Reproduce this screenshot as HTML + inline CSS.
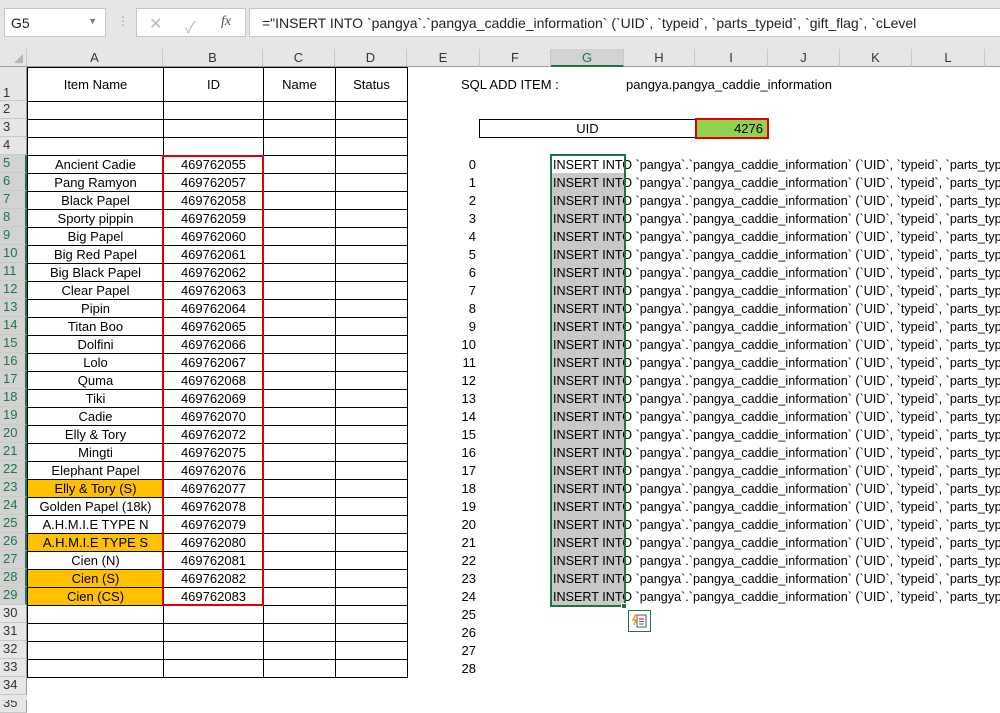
<!DOCTYPE html>
<html><head><meta charset="utf-8"><style>
*{margin:0;padding:0;box-sizing:border-box}
body{width:1000px;height:700px;overflow:hidden;background:#fff;font-family:"Liberation Sans","Noto Sans CJK JP",sans-serif;font-size:13px;color:#000;position:relative}
.a{position:absolute}
.top{left:0;top:0;width:1000px;height:49px;background:#e6e6e6}
.nb{left:4px;top:8px;width:102px;height:29px;background:#fff;border:1px solid #c6c6c6;font-size:14px;padding:6px 0 0 6px;color:#222}
.fx{left:136px;top:8px;width:110px;height:29px;background:#fff;border:1px solid #c6c6c6;color:#bbb}
.fb{left:249px;top:8px;width:760px;height:29px;background:#fff;border:1px solid #c6c6c6;font-size:14px;padding:6px 0 0 12px;white-space:nowrap;color:#222}
.ch{top:49px;height:18px;background:#e6e6e6;border-right:1px solid #c8c8c8;border-bottom:1px solid #9b9b9b;text-align:center;font-size:13px;line-height:17px;color:#333}
.rh{left:0;width:27px;background:#e6e6e6;border-bottom:1px solid #c8c8c8;border-right:1px solid #9b9b9b;font-size:13px;color:#333;padding-left:3px}
.rh.s{color:#217346;border-right:2px solid #217346;background:#d2d2d2}
table{position:absolute;left:27px;top:67px;border-collapse:collapse}
td{border:1px solid #000;height:18px;text-align:center;font-size:13px;padding:0;line-height:16px;white-space:nowrap}
tr.r1 td{height:34px;vertical-align:middle}
td.y{background:#ffc000}
.n{width:40px;text-align:right;left:436px;height:18px;line-height:18px}
.g{left:553px;height:18px;line-height:18px;white-space:nowrap;font-size:12.6px}
</style></head><body>
<div class="a top"></div>
<div class="a nb">G5<span style="position:absolute;right:8px;top:7px;font-size:9px;color:#777">▼</span></div>
<div class="a" style="left:117px;top:14px;color:#999;font-size:12px">⋮</div>
<div class="a fx"><span class="a" style="left:12px;top:5px;font-size:16px">✕</span><span class="a" style="left:48px;top:5px;font-size:16px">✓</span><span class="a" style="left:84px;top:5px;font-style:italic;font-family:'Liberation Serif',serif;color:#555;font-size:14px">fx</span></div>
<div class="a fb">="INSERT INTO `pangya`.`pangya_caddie_information` (`UID`, `typeid`, `parts_typeid`, `gift_flag`, `cLevel</div>
<div class="a ch" style="left:0;width:27px"><span class="a" style="left:14px;top:5px;width:0;height:0;border-left:9px solid transparent;border-bottom:9px solid #b4b4b4"></span></div>
<div class="a ch" style="left:27px;width:136px">A</div>
<div class="a ch" style="left:163px;width:100px">B</div>
<div class="a ch" style="left:263px;width:72px">C</div>
<div class="a ch" style="left:335px;width:72px">D</div>
<div class="a ch" style="left:407px;width:73px">E</div>
<div class="a ch" style="left:480px;width:71px">F</div>
<div class="a ch" style="left:551px;width:73px;background:#d2d2d2;color:#217346;border-bottom:2px solid #217346">G</div>
<div class="a ch" style="left:624px;width:71px">H</div>
<div class="a ch" style="left:695px;width:73px">I</div>
<div class="a ch" style="left:768px;width:72px">J</div>
<div class="a ch" style="left:840px;width:72px">K</div>
<div class="a ch" style="left:912px;width:73px">L</div>
<div class="a ch" style="left:985px;width:20px"></div>

<div class="a rh" style="top:67px;height:34px;padding-top:18px">1</div>
<div class="a rh" style="top:101px;height:18px">2</div>
<div class="a rh" style="top:119px;height:18px">3</div>
<div class="a rh" style="top:137px;height:18px">4</div>
<div class="a rh s" style="top:155px;height:18px">5</div>
<div class="a rh s" style="top:173px;height:18px">6</div>
<div class="a rh s" style="top:191px;height:18px">7</div>
<div class="a rh s" style="top:209px;height:18px">8</div>
<div class="a rh s" style="top:227px;height:18px">9</div>
<div class="a rh s" style="top:245px;height:18px">10</div>
<div class="a rh s" style="top:263px;height:18px">11</div>
<div class="a rh s" style="top:281px;height:18px">12</div>
<div class="a rh s" style="top:299px;height:18px">13</div>
<div class="a rh s" style="top:317px;height:18px">14</div>
<div class="a rh s" style="top:335px;height:18px">15</div>
<div class="a rh s" style="top:353px;height:18px">16</div>
<div class="a rh s" style="top:371px;height:18px">17</div>
<div class="a rh s" style="top:389px;height:18px">18</div>
<div class="a rh s" style="top:407px;height:18px">19</div>
<div class="a rh s" style="top:425px;height:18px">20</div>
<div class="a rh s" style="top:443px;height:18px">21</div>
<div class="a rh s" style="top:461px;height:18px">22</div>
<div class="a rh s" style="top:479px;height:18px">23</div>
<div class="a rh s" style="top:497px;height:18px">24</div>
<div class="a rh s" style="top:515px;height:18px">25</div>
<div class="a rh s" style="top:533px;height:18px">26</div>
<div class="a rh s" style="top:551px;height:18px">27</div>
<div class="a rh s" style="top:569px;height:18px">28</div>
<div class="a rh s" style="top:587px;height:18px">29</div>
<div class="a rh" style="top:605px;height:18px">30</div>
<div class="a rh" style="top:623px;height:18px">31</div>
<div class="a rh" style="top:641px;height:18px">32</div>
<div class="a rh" style="top:659px;height:18px">33</div>
<div class="a rh" style="top:677px;height:18px">34</div>
<div class="a rh" style="top:695px;height:18px">35</div>

<table>
<colgroup><col style="width:136px"><col style="width:100px"><col style="width:72px"><col style="width:72px"></colgroup>
<tr class="r1"><td>Item Name</td><td>ID</td><td>Name</td><td>Status</td></tr>
<tr><td></td><td></td><td></td><td></td></tr>
<tr><td></td><td></td><td></td><td></td></tr>
<tr><td></td><td></td><td></td><td></td></tr>
<tr><td>Ancient Cadie</td><td>469762055</td><td></td><td></td></tr>
<tr><td>Pang Ramyon</td><td>469762057</td><td></td><td></td></tr>
<tr><td>Black Papel</td><td>469762058</td><td></td><td></td></tr>
<tr><td>Sporty pippin</td><td>469762059</td><td></td><td></td></tr>
<tr><td>Big Papel</td><td>469762060</td><td></td><td></td></tr>
<tr><td>Big Red Papel</td><td>469762061</td><td></td><td></td></tr>
<tr><td>Big Black Papel</td><td>469762062</td><td></td><td></td></tr>
<tr><td>Clear Papel</td><td>469762063</td><td></td><td></td></tr>
<tr><td>Pipin</td><td>469762064</td><td></td><td></td></tr>
<tr><td>Titan Boo</td><td>469762065</td><td></td><td></td></tr>
<tr><td>Dolfini</td><td>469762066</td><td></td><td></td></tr>
<tr><td>Lolo</td><td>469762067</td><td></td><td></td></tr>
<tr><td>Quma</td><td>469762068</td><td></td><td></td></tr>
<tr><td>Tiki</td><td>469762069</td><td></td><td></td></tr>
<tr><td>Cadie</td><td>469762070</td><td></td><td></td></tr>
<tr><td>Elly &amp; Tory</td><td>469762072</td><td></td><td></td></tr>
<tr><td>Mingti</td><td>469762075</td><td></td><td></td></tr>
<tr><td>Elephant Papel</td><td>469762076</td><td></td><td></td></tr>
<tr><td class="y">Elly &amp; Tory (S)</td><td>469762077</td><td></td><td></td></tr>
<tr><td>Golden Papel (18k)</td><td>469762078</td><td></td><td></td></tr>
<tr><td>A.H.M.I.E TYPE N</td><td>469762079</td><td></td><td></td></tr>
<tr><td class="y">A.H.M.I.E TYPE S</td><td>469762080</td><td></td><td></td></tr>
<tr><td>Cien (N)</td><td>469762081</td><td></td><td></td></tr>
<tr><td class="y">Cien (S)</td><td>469762082</td><td></td><td></td></tr>
<tr><td class="y">Cien (CS)</td><td>469762083</td><td></td><td></td></tr>
<tr><td></td><td></td><td></td><td></td></tr>
<tr><td></td><td></td><td></td><td></td></tr>
<tr><td></td><td></td><td></td><td></td></tr>
<tr><td></td><td></td><td></td><td></td></tr>
</table>
<div class="a" style="left:162px;top:155px;width:102px;height:451px;border:2px solid #e00000"></div>
<div class="a" style="left:0;top:695px;width:27px;height:5px;background:#e6e6e6"></div>

<div class="a" style="left:461px;top:77px">SQL ADD ITEM :</div>
<div class="a" style="left:626px;top:77px">pangya.pangya_caddie_information</div>
<div class="a" style="left:479px;top:119px;width:217px;height:19px;border:1px solid #000;text-align:center;line-height:17px">UID</div>
<div class="a" style="left:695px;top:118px;width:74px;height:21px;border:2px solid #e00000;background:#92d050;text-align:right;padding-right:4px;line-height:17px">4276</div>

<div class="a" style="left:552px;top:173px;width:72px;height:432px;background:#c8c8c8"></div>
<div class="a n" style="top:156px">0</div><div class="a n" style="top:174px">1</div><div class="a n" style="top:192px">2</div><div class="a n" style="top:210px">3</div><div class="a n" style="top:228px">4</div><div class="a n" style="top:246px">5</div><div class="a n" style="top:264px">6</div><div class="a n" style="top:282px">7</div><div class="a n" style="top:300px">8</div><div class="a n" style="top:318px">9</div><div class="a n" style="top:336px">10</div><div class="a n" style="top:354px">11</div><div class="a n" style="top:372px">12</div><div class="a n" style="top:390px">13</div><div class="a n" style="top:408px">14</div><div class="a n" style="top:426px">15</div><div class="a n" style="top:444px">16</div><div class="a n" style="top:462px">17</div><div class="a n" style="top:480px">18</div><div class="a n" style="top:498px">19</div><div class="a n" style="top:516px">20</div><div class="a n" style="top:534px">21</div><div class="a n" style="top:552px">22</div><div class="a n" style="top:570px">23</div><div class="a n" style="top:588px">24</div><div class="a n" style="top:606px">25</div><div class="a n" style="top:624px">26</div><div class="a n" style="top:642px">27</div><div class="a n" style="top:660px">28</div>

<div class="a g" style="top:156px">INSERT INTO `pangya`.`pangya_caddie_information` (`UID`, `typeid`, `parts_typeid`</div>
<div class="a g" style="top:174px">INSERT INTO `pangya`.`pangya_caddie_information` (`UID`, `typeid`, `parts_typeid`</div>
<div class="a g" style="top:192px">INSERT INTO `pangya`.`pangya_caddie_information` (`UID`, `typeid`, `parts_typeid`</div>
<div class="a g" style="top:210px">INSERT INTO `pangya`.`pangya_caddie_information` (`UID`, `typeid`, `parts_typeid`</div>
<div class="a g" style="top:228px">INSERT INTO `pangya`.`pangya_caddie_information` (`UID`, `typeid`, `parts_typeid`</div>
<div class="a g" style="top:246px">INSERT INTO `pangya`.`pangya_caddie_information` (`UID`, `typeid`, `parts_typeid`</div>
<div class="a g" style="top:264px">INSERT INTO `pangya`.`pangya_caddie_information` (`UID`, `typeid`, `parts_typeid`</div>
<div class="a g" style="top:282px">INSERT INTO `pangya`.`pangya_caddie_information` (`UID`, `typeid`, `parts_typeid`</div>
<div class="a g" style="top:300px">INSERT INTO `pangya`.`pangya_caddie_information` (`UID`, `typeid`, `parts_typeid`</div>
<div class="a g" style="top:318px">INSERT INTO `pangya`.`pangya_caddie_information` (`UID`, `typeid`, `parts_typeid`</div>
<div class="a g" style="top:336px">INSERT INTO `pangya`.`pangya_caddie_information` (`UID`, `typeid`, `parts_typeid`</div>
<div class="a g" style="top:354px">INSERT INTO `pangya`.`pangya_caddie_information` (`UID`, `typeid`, `parts_typeid`</div>
<div class="a g" style="top:372px">INSERT INTO `pangya`.`pangya_caddie_information` (`UID`, `typeid`, `parts_typeid`</div>
<div class="a g" style="top:390px">INSERT INTO `pangya`.`pangya_caddie_information` (`UID`, `typeid`, `parts_typeid`</div>
<div class="a g" style="top:408px">INSERT INTO `pangya`.`pangya_caddie_information` (`UID`, `typeid`, `parts_typeid`</div>
<div class="a g" style="top:426px">INSERT INTO `pangya`.`pangya_caddie_information` (`UID`, `typeid`, `parts_typeid`</div>
<div class="a g" style="top:444px">INSERT INTO `pangya`.`pangya_caddie_information` (`UID`, `typeid`, `parts_typeid`</div>
<div class="a g" style="top:462px">INSERT INTO `pangya`.`pangya_caddie_information` (`UID`, `typeid`, `parts_typeid`</div>
<div class="a g" style="top:480px">INSERT INTO `pangya`.`pangya_caddie_information` (`UID`, `typeid`, `parts_typeid`</div>
<div class="a g" style="top:498px">INSERT INTO `pangya`.`pangya_caddie_information` (`UID`, `typeid`, `parts_typeid`</div>
<div class="a g" style="top:516px">INSERT INTO `pangya`.`pangya_caddie_information` (`UID`, `typeid`, `parts_typeid`</div>
<div class="a g" style="top:534px">INSERT INTO `pangya`.`pangya_caddie_information` (`UID`, `typeid`, `parts_typeid`</div>
<div class="a g" style="top:552px">INSERT INTO `pangya`.`pangya_caddie_information` (`UID`, `typeid`, `parts_typeid`</div>
<div class="a g" style="top:570px">INSERT INTO `pangya`.`pangya_caddie_information` (`UID`, `typeid`, `parts_typeid`</div>
<div class="a g" style="top:588px">INSERT INTO `pangya`.`pangya_caddie_information` (`UID`, `typeid`, `parts_typeid`</div>

<div class="a" style="left:550px;top:154px;width:76px;height:453px;border:2px solid #217346"></div>
<div class="a" style="left:621px;top:603px;width:6px;height:6px;background:#217346;border:1px solid #fff"></div>
<div class="a" style="left:628px;top:610px;width:23px;height:22px;border:1px solid #217346;background:#fff">
<svg width="21" height="20" viewBox="0 0 21 20"><rect x="8" y="4" width="9" height="12" fill="#fff" stroke="#555"/><line x1="10" y1="8" x2="15" y2="8" stroke="#c00"/><line x1="10" y1="10.5" x2="15" y2="10.5" stroke="#36c"/><line x1="10" y1="13" x2="15" y2="13" stroke="#36c"/><path d="M7 3 L4 9 L7 9 L5 14" fill="none" stroke="#f0a020" stroke-width="1.5"/></svg></div>
</body></html>
